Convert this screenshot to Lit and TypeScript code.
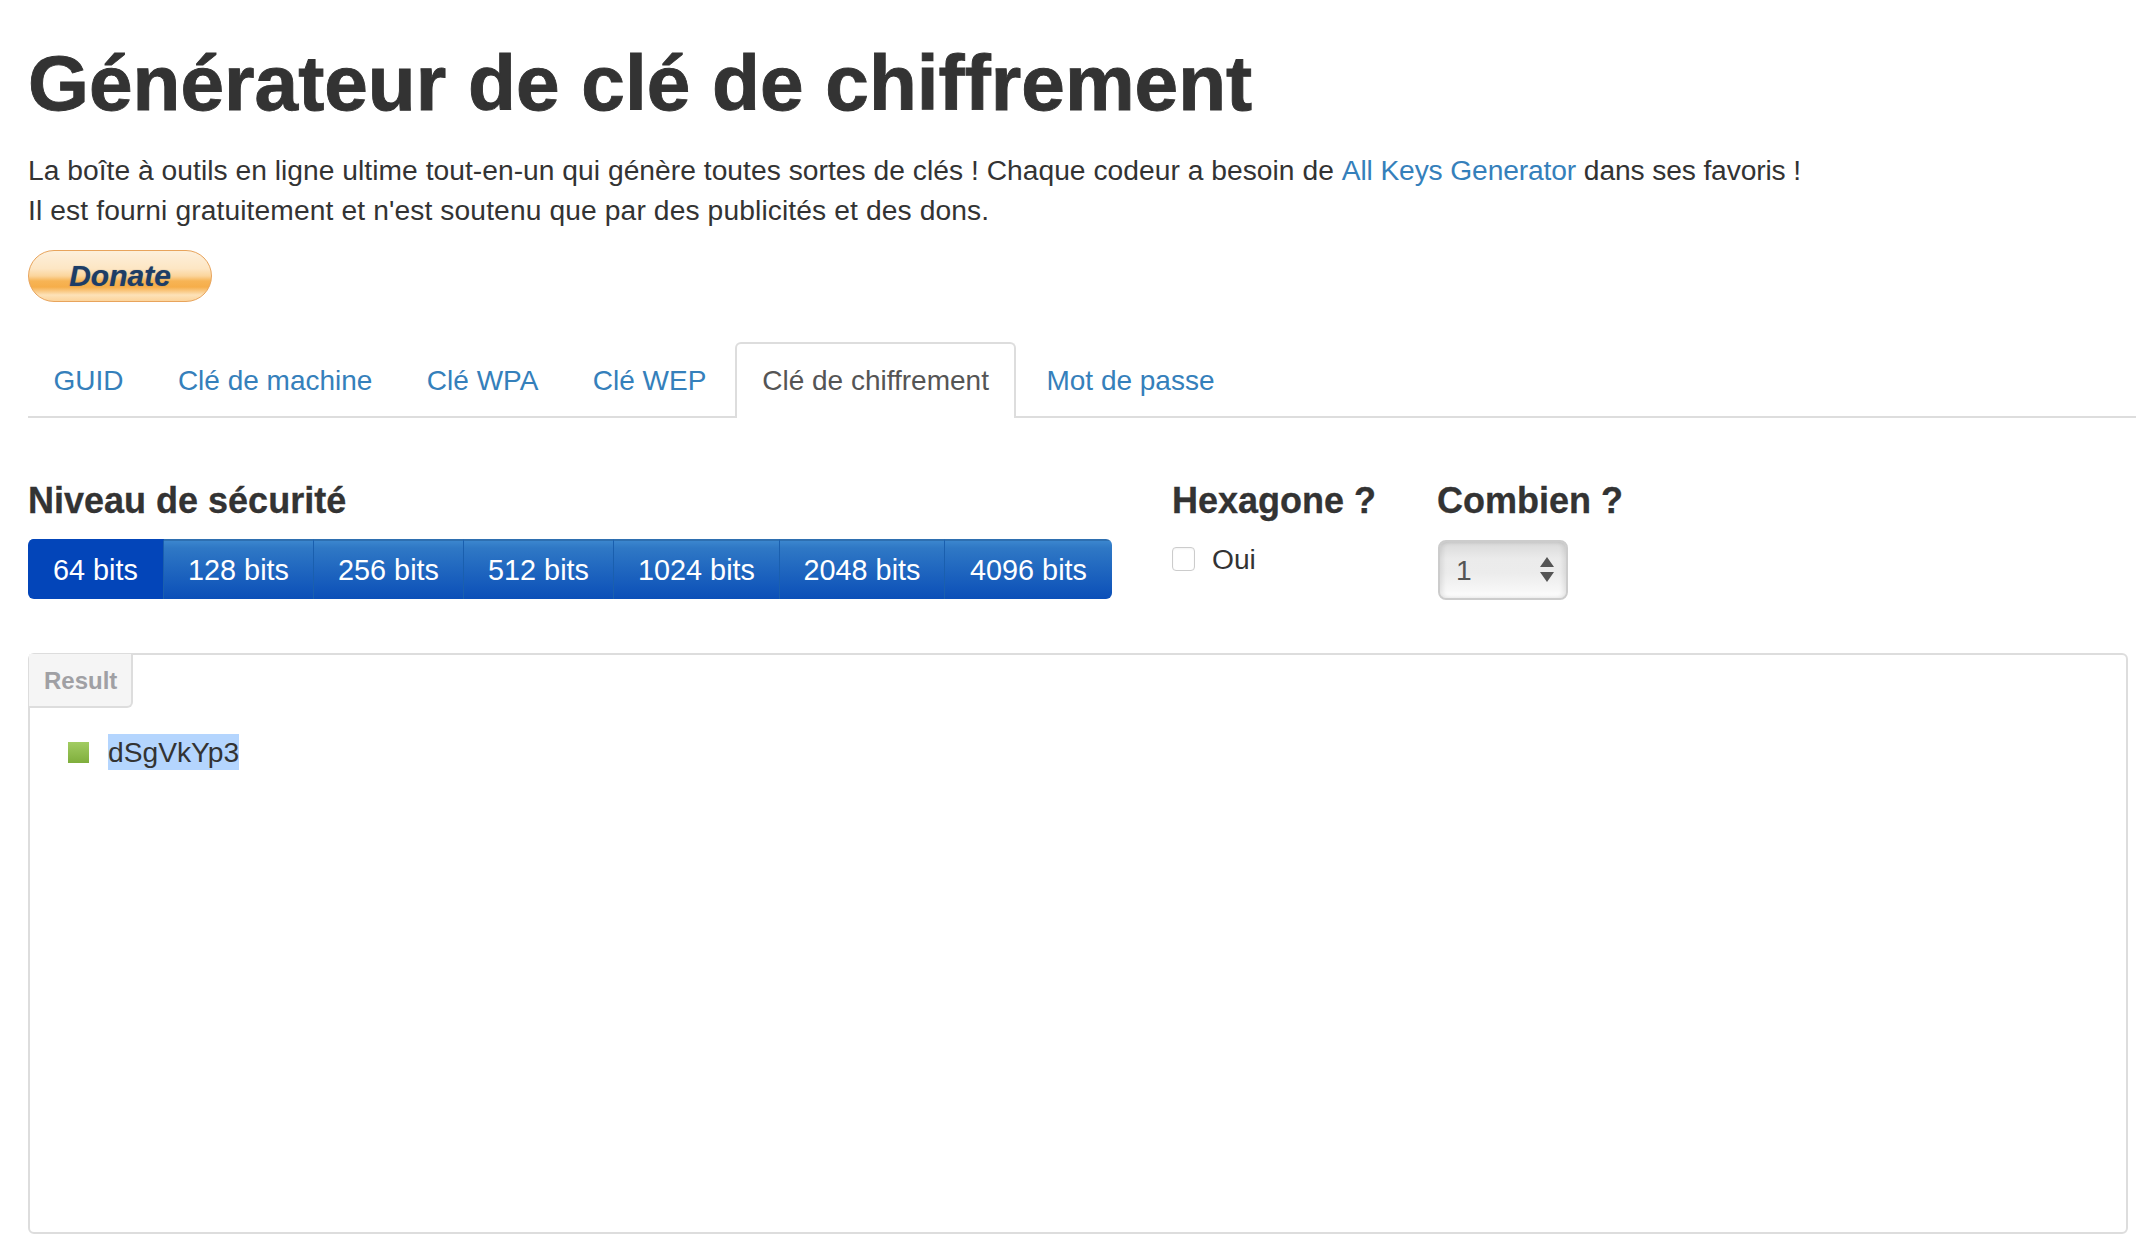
import { LitElement, html, css } from "lit";
import { customElement } from "lit/decorators.js";

const TABS = ["GUID", "Clé de machine", "Clé WPA", "Clé WEP", "Clé de chiffrement", "Mot de passe"];
const BITS = [64, 128, 256, 512, 1024, 2048, 4096];

@customElement("app-root")
export class AppRoot extends LitElement {
  static styles = css`
    :host { display: block; font-family: "Liberation Sans", Arial, sans-serif; color: #333; background: #fff; height: 1238px; overflow: hidden; font-size: 28.2px; line-height: 40px; }
    .page { padding: 0 0 0 28px; }
    h1 { margin: 0; padding-top: 38px; font-size: 78.4px; line-height: 90px; font-weight: 700; -webkit-text-stroke: 0.9px #333; }
    .intro { margin: 22px 0 0; }
    .lead { letter-spacing: 0.035px; }
    .tail { letter-spacing: -0.12px; }
    .second { letter-spacing: 0.12px; }
    a { color: #3580bb; text-decoration: none; }
    .donate { margin-top: 20px; width: 184px; height: 52px; box-sizing: border-box; border-radius: 26px; border: 1.5px solid #e8a45c; display: flex; align-items: center; justify-content: center; font-style: italic; font-weight: 700; font-size: 30px; color: #1d3d66; text-shadow: 0 0 1px rgba(29,61,102,.6); background: linear-gradient(#fdf0dc 0%, #fde6c4 35%, #fbd59c 50%, #f7b455 60%, #f6ae4a 72%, #fde2b8 88%, #fcd49c 100%); }
    .tabs { display: flex; margin-top: 40px; height: 76px; box-sizing: border-box; border-bottom: 2px solid #ddd; padding: 0; font-size: 28px; }
    .tab { height: 76px; box-sizing: border-box; padding: 19px 25.5px 0; color: #3580bb; margin-right: 3.4px; white-space: nowrap; }
    .tab.active { color: #555; background: #fff; border: 2px solid #ddd; border-bottom: 0; border-radius: 6px 6px 0 0; padding: 17px 25px 0; margin-right: 5px; }
    .options { display: flex; margin-top: 63px; }
    h3 { margin: 0; font-size: 36px; line-height: 40px; font-weight: 700; white-space: nowrap; -webkit-text-stroke: 0.3px #333; }
    .sec { width: 1144px; }
    .sec2 { width: 265px; }
    .group { display: flex; margin-top: 18px; width: 1084px; height: 60px; border-radius: 6px; overflow: hidden; color: #fff; font-size: 28.8px; }
    .seg { flex: none; display: flex; align-items: center; justify-content: center; box-sizing: border-box; border-right: 1px solid #1a5fae; background: linear-gradient(#3b86ce 0%, #2f78c5 12%, #0b4fb8 100%); border-top: 2px solid #2e6fb0; white-space: nowrap; }
    .seg:last-child { border-right: 0; }
    .seg.on { background: #0345b9; border-top-color: #0345b9; }
    .check { display: flex; align-items: center; margin-top: 18px; }
    .box { width: 23px; height: 24px; box-sizing: border-box; border: 1px solid #ccc; border-radius: 4px; background: #fff; margin-right: 17px; box-shadow: inset 0 1px 2px rgba(0,0,0,.05); }
    .select { margin-top: 19px; margin-left: 1px; width: 130px; height: 60px; box-sizing: border-box; border: 2px solid #ccc; border-radius: 8px; display: flex; align-items: center; justify-content: space-between; padding: 0 12px 0 16px; color: #555; background: linear-gradient(#d9d9d9 0%, #ebebeb 30%, #ececec 55%, #f6f6f6 85%, #fff 100%); box-shadow: inset -3px 0 4px rgba(0,0,0,.08), inset 3px 0 4px rgba(0,0,0,.08); }
    .panel { margin: 0 8px 0 0; height: 581px; box-sizing: border-box; border: 2px solid #ddd; border-radius: 6px; }
    .wrap { margin-top: 53px; }
    .label { width: 104px; height: 54px; box-sizing: border-box; margin: -1px 0 0 -1px; background: #f5f5f5; border: 2px solid #ddd; border-top: 0; border-left: 0; border-radius: 0 0 6px 0; color: #a0a0a4; font-weight: 700; font-size: 24px; padding: 7px 0 0 15px; }
    .item { display: flex; align-items: center; margin: 26px 0 0 38px; height: 36px; }
    .bullet { width: 21px; height: 21px; background: linear-gradient(#a2cc62, #7fae3c); margin-right: 19px; }
    .key { background: #b4d5fe; color: #333; line-height: 36px; }
  `;

  render() {
    const widths = [136, 150, 150, 150, 166, 165, 167];
    return html`<div class="page">
      <h1>Générateur de clé de chiffrement</h1>
      <p class="intro"><span class="lead">La boîte à outils en ligne ultime tout-en-un qui génère toutes sortes de clés ! Chaque codeur a besoin de </span><span class="tail"><a>All Keys Generator</a> dans ses favoris !</span><br><span class="second">Il est fourni gratuitement et n'est soutenu que par des publicités et des dons.</span></p>
      <div class="donate">Donate</div>
      <div class="tabs">${TABS.map((t, i) => html`<div class="tab ${i === 4 ? "active" : ""}">${t}</div>`)}</div>
      <div class="options">
        <div class="sec"><h3>Niveau de sécurité</h3>
          <div class="group">${BITS.map((b, i) => html`<div class="seg ${i === 0 ? "on" : ""}" style="width:${widths[i]}px">${b} bits</div>`)}</div>
        </div>
        <div class="sec2"><h3>Hexagone ?</h3>
          <div class="check"><span class="box"></span>Oui</div>
        </div>
        <div><h3>Combien ?</h3>
          <div class="select"><span>1</span>
            <svg width="14" height="26" viewBox="0 0 14 26"><path d="M7 0 L14 10 H0 Z M0 15 H14 L7 25 Z" fill="#555"/></svg>
          </div>
        </div>
      </div>
      <div class="wrap"><div class="panel">
        <div class="label">Result</div>
        <div class="item"><span class="bullet"></span><span class="key">dSgVkYp3</span></div>
      </div></div>
    </div>`;
  }
}
